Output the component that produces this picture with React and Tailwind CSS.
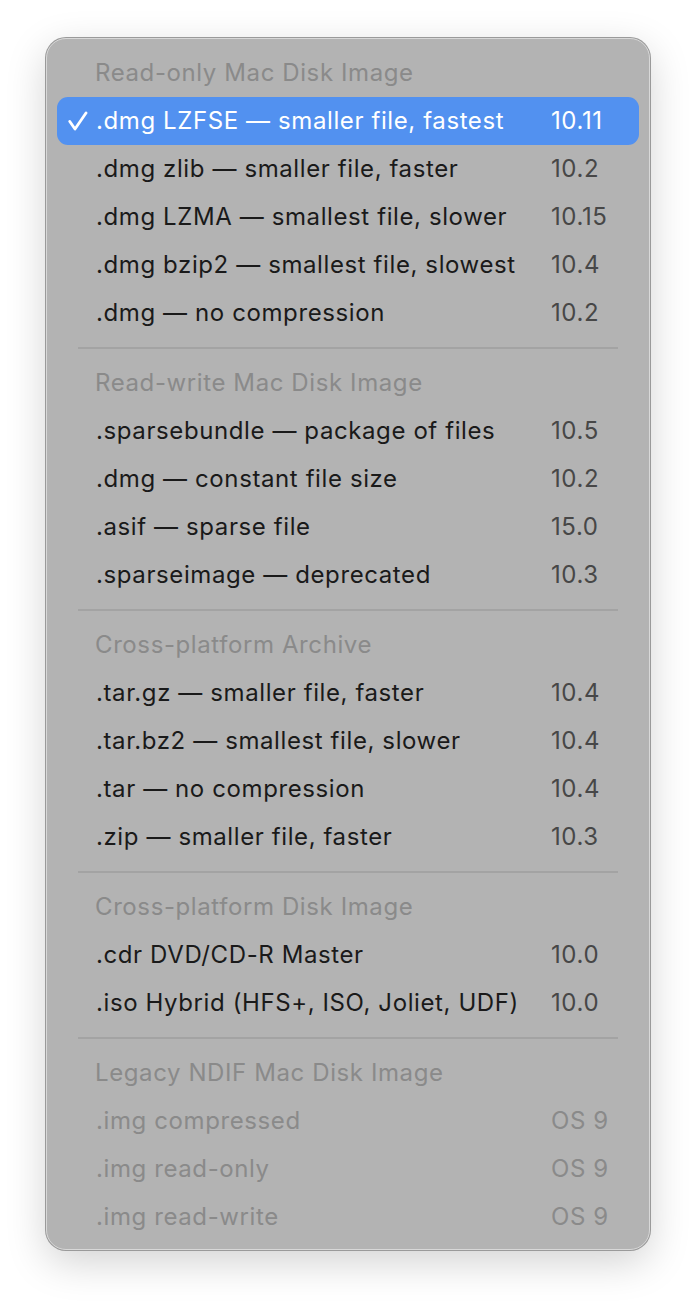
import React from "react";

const sections = [
  {
    title: "Read-only Mac Disk Image",
    items: [
      [".dmg LZFSE — smaller file, fastest", "10.11", "selected"],
      [".dmg zlib — smaller file, faster", "10.2"],
      [".dmg LZMA — smallest file, slower", "10.15"],
      [".dmg bzip2 — smallest file, slowest", "10.4"],
      [".dmg — no compression", "10.2"],
    ],
  },
  {
    title: "Read-write Mac Disk Image",
    items: [
      [".sparsebundle — package of files", "10.5"],
      [".dmg — constant file size", "10.2"],
      [".asif — sparse file", "15.0"],
      [".sparseimage — deprecated", "10.3"],
    ],
  },
  {
    title: "Cross-platform Archive",
    items: [
      [".tar.gz — smaller file, faster", "10.4"],
      [".tar.bz2 — smallest file, slower", "10.4"],
      [".tar — no compression", "10.4"],
      [".zip — smaller file, faster", "10.3"],
    ],
  },
  {
    title: "Cross-platform Disk Image",
    items: [
      [".cdr DVD/CD-R Master", "10.0"],
      [".iso Hybrid (HFS+, ISO, Joliet, UDF)", "10.0"],
    ],
  },
  {
    title: "Legacy NDIF Mac Disk Image",
    items: [
      [".img compressed", "OS 9", "disabled"],
      [".img read-only", "OS 9", "disabled"],
      [".img read-write", "OS 9", "disabled"],
    ],
  },
];

function Row({ label, version, state }) {
  const selected = state === "selected";
  const disabled = state === "disabled";
  return (
    <div
      className={
        "flex items-center h-[48px] mx-[10px] rounded-[11px] " +
        (selected ? "bg-[#5291f0] text-white" : disabled ? "text-[#8a8a8a]" : "text-[#1a1a1a]")
      }
    >
      <div className="w-[39px] flex justify-end pr-[8px]">
        {selected && (
          <svg width="20" height="20" viewBox="0 0 20 20" fill="none">
            <path d="M1.8 10.5 L7 18 L18 2" stroke="white" strokeWidth="2.8" strokeLinecap="round" strokeLinejoin="round" />
          </svg>
        )}
      </div>
      <div className="flex-1">{label}</div>
      <div
        className={
          "w-[88px] " + (selected ? "text-white" : disabled ? "text-[#8a8a8a]" : "text-[#474747]")
        }
      >
        {version}
      </div>
    </div>
  );
}

export default function App() {
  return (
    <div
      className="w-[696px] h-[1304px] bg-white pt-[38px] pl-[46px]"
      style={{ fontFamily: "Inter, 'Noto Sans', sans-serif" }}
    >
      <div className="w-[604px] h-[1212px] bg-[#b3b3b3] rounded-[20px] border border-[#d8d8d8] shadow-[0_0_0_1px_#9a9a9a,0_12px_40px_rgba(0,0,0,0.18)] pt-[10px] pb-[9px] text-[24px] tracking-[0.6px]">
        {sections.map((s, i) => (
          <div key={s.title}>
            {i > 0 && (
              <div className="h-[22px] flex items-center px-[31px]">
                <div className="h-[2px] w-full bg-[#a3a3a3]" />
              </div>
            )}
            <div className="h-[48px] flex items-center pl-[48px] text-[#8a8a8a]">{s.title}</div>
            {s.items.map((it) => (
              <Row key={it[0]} label={it[0]} version={it[1]} state={it[2]} />
            ))}
          </div>
        ))}
      </div>
    </div>
  );
}
